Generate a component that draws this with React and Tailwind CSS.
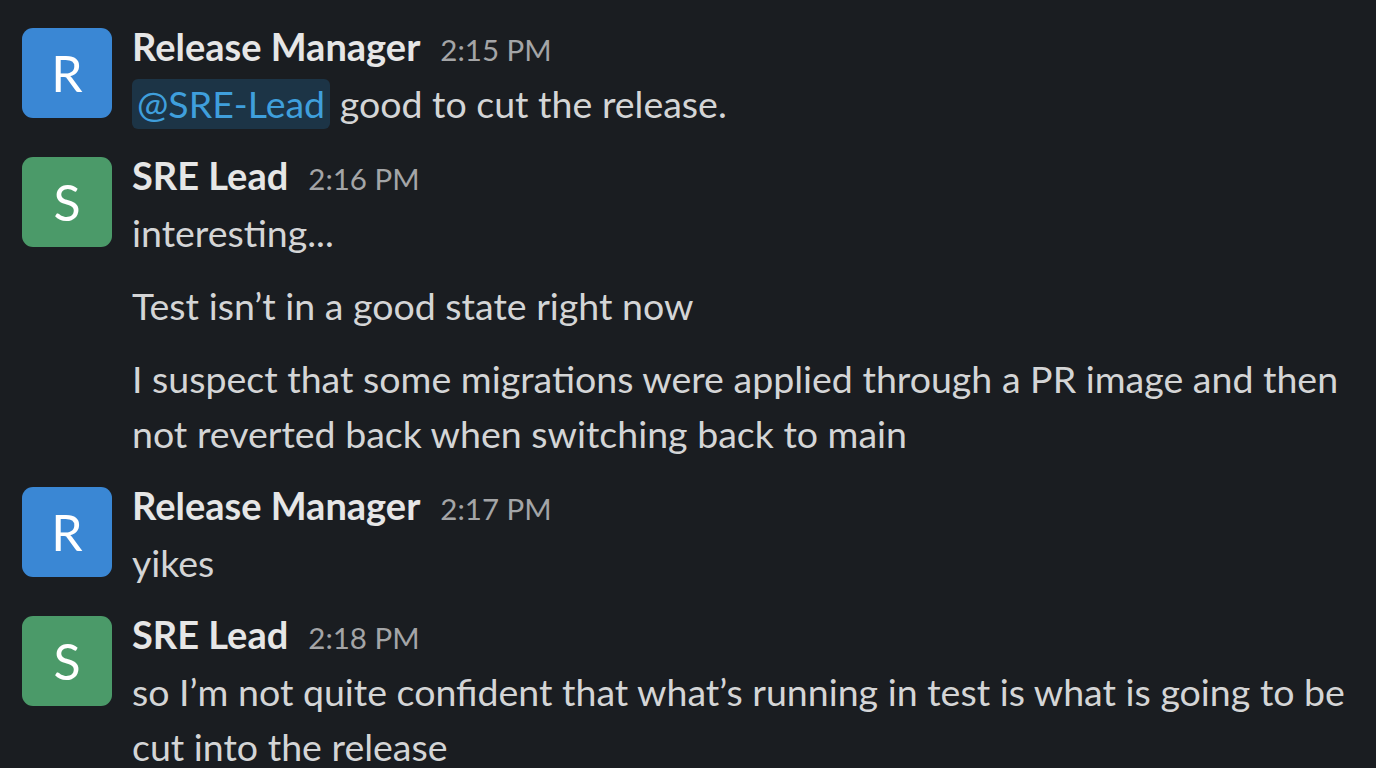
import React from "react";

const messages = [
  {
    name: "Release Manager",
    time: "2:15 PM",
    initial: "R",
    color: "bg-[#3a87d4]",
    paras: [
      [
        <span key="m" className="inline-block rounded-[6px] bg-[#1c3446] px-[5px] leading-[50px] text-[#3f9fdc]">@SRE-Lead</span>,
        " good to cut the release.",
      ],
    ],
  },
  {
    name: "SRE Lead",
    time: "2:16 PM",
    initial: "S",
    color: "bg-[#4b9a69]",
    paras: [
      ["interesting..."],
      ["Test isn’t in a good state right now"],
      ["I suspect that some migrations were applied through a PR image and then not reverted back when switching back to main"],
    ],
  },
  {
    name: "Release Manager",
    time: "2:17 PM",
    initial: "R",
    color: "bg-[#3a87d4]",
    paras: [["yikes"]],
  },
  {
    name: "SRE Lead",
    time: "2:18 PM",
    initial: "S",
    color: "bg-[#4b9a69]",
    paras: [
      ["so I’m not quite confident that what’s running in test is what is going to be cut into the release"],
    ],
  },
];

export default function App() {
  return (
    <div
      className="h-[768px] w-[1376px] overflow-hidden bg-[#1a1d21] pl-[22px] pr-[20px] pt-[20px]"
      style={{ fontFamily: "Lato, 'Noto Sans', sans-serif" }}
    >
      <div className="flex flex-col gap-[18px]">
        {messages.map((m, i) => (
          <div key={i} className="flex gap-[20px]">
            <div
              className={`mt-[8px] flex h-[90px] w-[90px] shrink-0 items-center justify-center rounded-[11px] ${m.color} text-[50px] leading-none text-white`}
            >
              {m.initial}
            </div>
            <div className="flex flex-col gap-[18px]">
              <div>
                <div className="flex items-baseline gap-[20px] leading-[52px]">
                  <span className="text-[38px] font-bold text-[#e6e6e6]">{m.name}</span>
                  <span className="text-[29.5px] text-[#a4a5a7]">{m.time}</span>
                </div>
                <p className="text-[37.5px] leading-[55px] text-[#d4d5d6]">{m.paras[0]}</p>
              </div>
              {m.paras.slice(1).map((p, j) => (
                <p key={j} className="text-[37.5px] leading-[55px] text-[#d4d5d6]">{p}</p>
              ))}
            </div>
          </div>
        ))}
      </div>
    </div>
  );
}
